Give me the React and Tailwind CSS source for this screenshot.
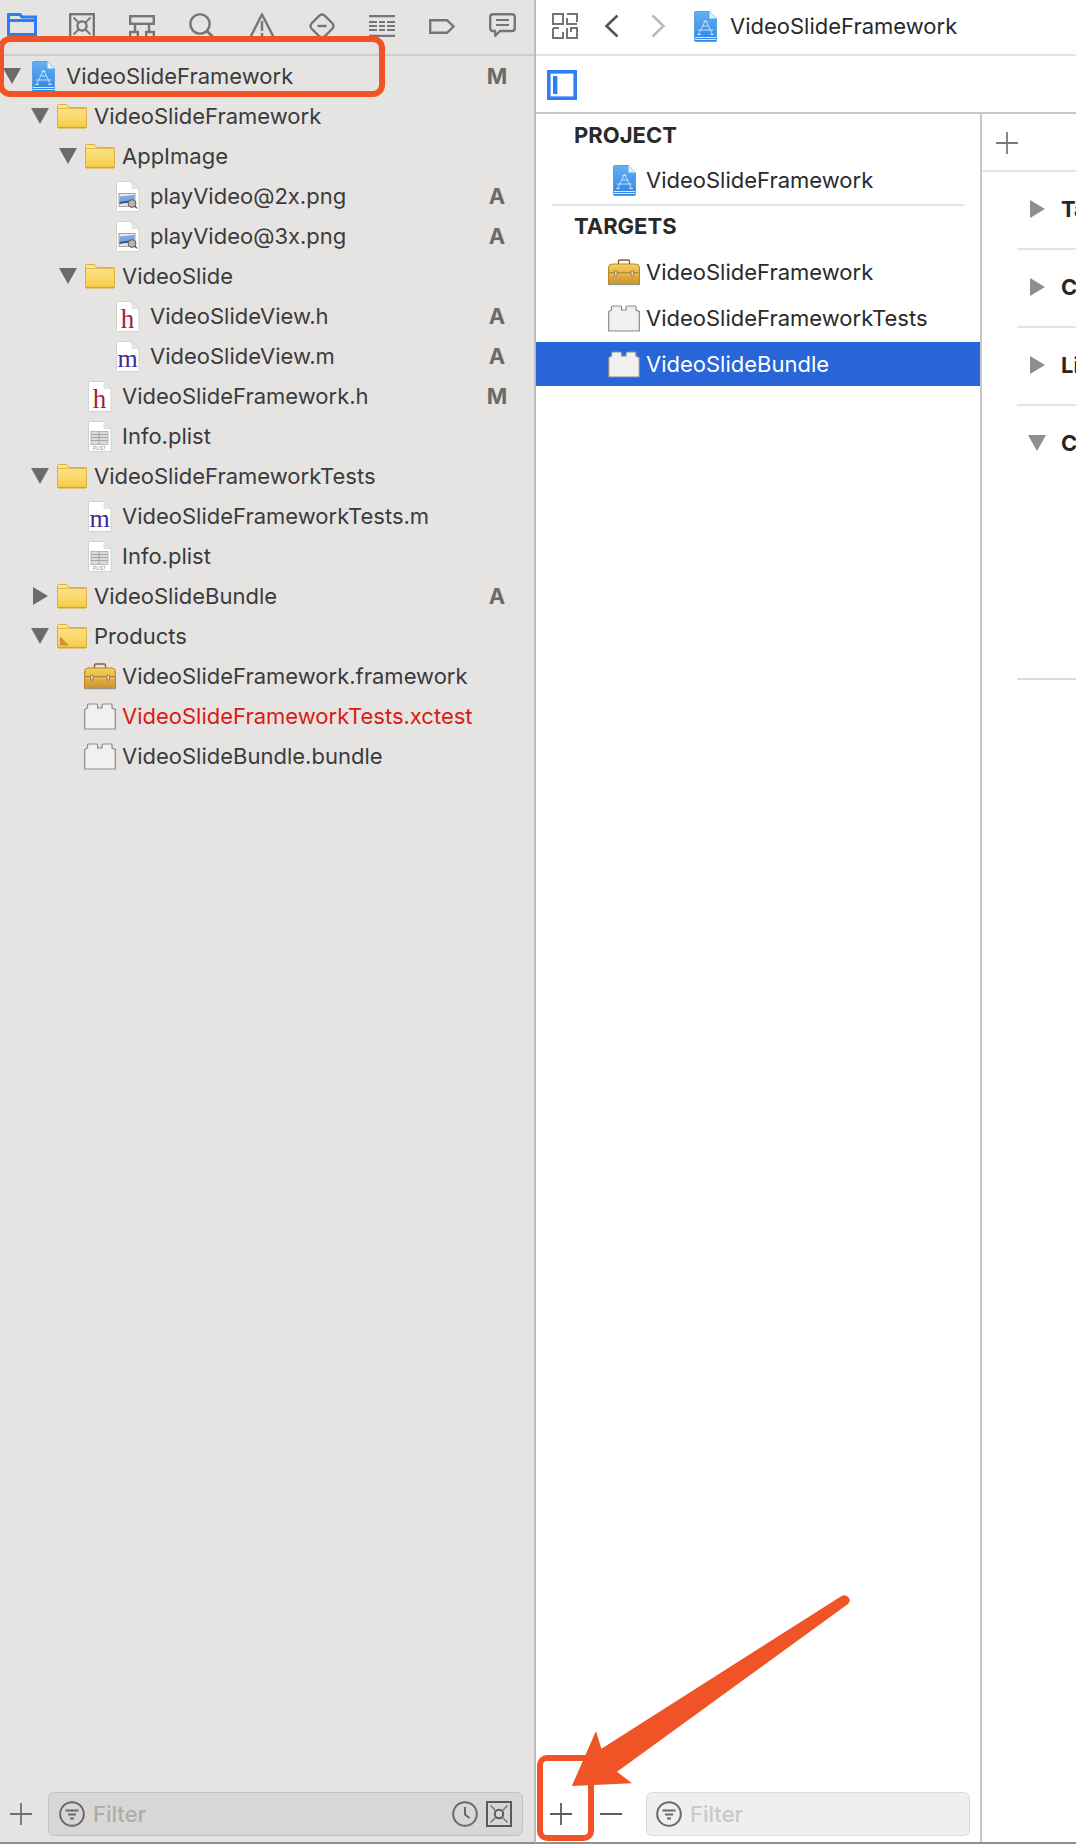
import React from "react";

const FONT = "font-['Inter','Liberation_Sans',sans-serif]";

function Defs() {
  return (
    <svg className="absolute w-0 h-0" aria-hidden="true">
      <defs>
        <linearGradient id="gFolder" x1="0" y1="0" x2="0" y2="1">
          <stop offset="0" stopColor="#fbe58f" />
          <stop offset="0.55" stopColor="#f9d968" />
          <stop offset="1" stopColor="#f5c945" />
        </linearGradient>
        <linearGradient id="gBlue" x1="0" y1="0" x2="0" y2="1">
          <stop offset="0" stopColor="#63b0f1" />
          <stop offset="1" stopColor="#2f84e4" />
        </linearGradient>
        <linearGradient id="gBox" x1="0" y1="0" x2="0" y2="1">
          <stop offset="0" stopColor="#f6d262" />
          <stop offset="0.5" stopColor="#e5b13f" />
          <stop offset="1" stopColor="#c9942f" />
        </linearGradient>
      </defs>
    </svg>
  );
}

function Tri({ open, dark = true }) {
  const c = dark ? "#6c6b69" : "#8e8e8e";
  return open ? (
    <svg width="18" height="16" viewBox="0 0 18 16" className="block">
      <path d="M0 0H18L9 16Z" fill={c} />
    </svg>
  ) : (
    <svg width="18" height="18" viewBox="0 0 18 18" className="block">
      <path d="M2 0L17 9L2 18Z" fill={c} />
    </svg>
  );
}

function Folder({ products }) {
  return (
    <svg width="30" height="25" viewBox="0 0 30 25" className="block">
      <path d="M.5 23V1.5Q.5.5 1.5.5H9.5L12 3.5H28.5Q29.5 3.5 29.5 4.5V23Q29.5 24 28.5 24H1.5Q.5 24 .5 23Z" fill="url(#gFolder)" stroke="#dcae42" />
      <path d="M1 4.5H29" stroke="#e5b94e" strokeWidth="1" />
      <path d="M1 23.5H29" stroke="#cfa23c" strokeWidth="1.2" />
      {products && <path d="M3 21.5V12.5L12 21.5Z" fill="#c6923a" />}
    </svg>
  );
}

function ProjectIcon() {
  return (
    <svg width="23" height="31" viewBox="0 0 23 31" className="block">
      <path d="M.5 1.5Q.5.5 1.5.5H15.5L22.5 7.5V29.5Q22.5 30.5 21.5 30.5H1.5Q.5 30.5 .5 29.5Z" fill="url(#gBlue)" stroke="#5aa0e2" />
      <path d="M15.5.5V7.5H22.5Z" fill="#e4f0fb" />
      <path d="M1 26.5H22M1 28.5H22" stroke="#d5e8fa" strokeWidth="1" />
      <path d="M11.5 9L4.5 23.5M11.5 9L18.5 23.5M3.5 19H19.5M8 15H15M3 23.5H7M16 23.5H20" stroke="#cfe4fa" strokeWidth="0.9" fill="none" />
      <path d="M9.5 10.5L13.5 10.5" stroke="#cfe4fa" strokeWidth="0.9" />
    </svg>
  );
}

function Doc({ children }) {
  return (
    <svg width="24" height="31" viewBox="0 0 24 31" className="block">
      <path d="M.5 1.2Q.5.5 1.2.5H16L23 7.5V29.8Q23 30.5 22.3 30.5H1.2Q.5 30.5 .5 29.8Z" fill="#ffffff" stroke="#d3d2d0" />
      <path d="M16 .5V7.5H23Z" fill="#e8e8e8" stroke="#d3d2d0" strokeWidth="0.6" />
      {children}
    </svg>
  );
}

function HFile() {
  return (
    <Doc>
      <text x="11.5" y="26.5" textAnchor="middle" fontFamily="'Liberation Serif',serif" fontSize="27" fill="#a51f36">h</text>
    </Doc>
  );
}

function MFile() {
  return (
    <Doc>
      <text x="11.5" y="26" textAnchor="middle" fontFamily="'Liberation Serif',serif" fontSize="26" fill="#3f2a90">m</text>
    </Doc>
  );
}

function PngFile() {
  return (
    <Doc>
      <rect x="3" y="12.5" width="16" height="13" fill="#e6e9ee" stroke="#8d7f6e" strokeWidth="0.7" />
      <path d="M3.5 15.5L18.5 14V20L3.5 21.5Z" fill="#7ba7e0" />
      <path d="M3.5 21L18.5 19V20.5L3.5 23Z" fill="#2f4f86" />
      <circle cx="16" cy="22.5" r="3.8" fill="#b9b6ae" stroke="#5c5a55" strokeWidth="1.1" />
      <path d="M18.8 25.2L21 27.2" stroke="#55534f" strokeWidth="1.5" />
    </Doc>
  );
}

function PlistFile() {
  return (
    <Doc>
      <rect x="3" y="10.5" width="17" height="13" fill="#dcdcdc" stroke="#a0a0a0" strokeWidth="0.7" />
      <path d="M3 13.5H20M3 16.5H20M3 19.5H20M11 10.5V23.5" stroke="#9a9a9a" strokeWidth="0.8" />
      <text x="11.5" y="29" textAnchor="middle" fontFamily="'Liberation Sans',sans-serif" fontSize="4.6" fill="#8d8d8d">PLIST</text>
    </Doc>
  );
}

function Toolbox() {
  return (
    <svg width="32" height="27" viewBox="0 0 32 27" className="block">
      <path d="M10.5 5V2.2Q10.5 1 11.7 1H20.3Q21.5 1 21.5 2.2V5" fill="none" stroke="#8a5d2a" strokeWidth="1.4" />
      <path d="M.5 9Q.5 5 4 5H28Q31.5 5 31.5 9V25.5H.5Z" fill="url(#gBox)" stroke="#b5842f" />
      <path d="M1 14H31" stroke="#a87728" strokeWidth="1.2" />
      <path d="M1 15.2H31" stroke="#f4d47a" strokeWidth="0.8" />
      <rect x="6.5" y="12" width="2.6" height="5" rx="1" fill="#e8e2d2" stroke="#6e5a35" strokeWidth="0.7" />
      <rect x="23" y="12" width="2.6" height="5" rx="1" fill="#e8e2d2" stroke="#6e5a35" strokeWidth="0.7" />
      <path d="M1 25.5H31" stroke="#9a9387" strokeWidth="1.4" />
    </svg>
  );
}

function Lego() {
  return (
    <svg width="32" height="27" viewBox="0 0 32 27" className="block">
      <path d="M.7 26V6.5L3.5 5V2.2Q3.5 1 4.7 1H12.5Q13.6 1 13.6 2.2V5H18V2.2Q18 1 19.2 1H27Q28 1 28 2.2V5L31.3 6.5V26Z" fill="#f0f0f0" stroke="#8a8a8a" strokeWidth="1.2" />
    </svg>
  );
}

const TB = "#767676";

function ToolbarIcons() {
  const s = { fill: "none", stroke: TB, strokeWidth: 2.4 };
  return (
    <div className="flex items-start -ml-2">
      <div className="w-[60px] flex justify-center">
        <svg width="30" height="23" viewBox="0 0 30 23" className="block">
          <path d="M1.5 21.5V1.5H13L15 4H28.5V21.5Z" fill="none" stroke="#2f7df6" strokeWidth="3" />
          <path d="M3 7.5H27" stroke="#2f7df6" strokeWidth="3" />
        </svg>
      </div>
      <div className="w-[60px] flex justify-center">
        <svg width="26" height="27" viewBox="0 0 26 27" className="block">
          <rect x="1.2" y="1.2" width="23.6" height="24.6" {...s} />
          <circle cx="13" cy="13" r="4.6" {...s} />
          <path d="M4.5 4.5L9.5 9.5M21.5 4.5L16.5 9.5M4.5 21.5L9.5 16.5M21.5 21.5L16.5 16.5" {...s} strokeWidth="1.8" />
        </svg>
      </div>
      <div className="w-[60px] flex justify-center pt-[2px]">
        <svg width="26" height="26" viewBox="0 0 26 26" className="block">
          <rect x="1.2" y="1.2" width="23.6" height="7.6" {...s} />
          <path d="M6 9V17M20 9V17" {...s} />
          <rect x="1.2" y="17" width="7.6" height="8" {...s} />
          <rect x="17.2" y="17" width="7.6" height="8" {...s} />
        </svg>
      </div>
      <div className="w-[60px] flex justify-center">
        <svg width="26" height="26" viewBox="0 0 26 26" className="block">
          <circle cx="11" cy="11" r="9.6" {...s} />
          <path d="M18 18L25 25" {...s} strokeWidth="3" />
        </svg>
      </div>
      <div className="w-[60px] flex justify-center">
        <svg width="26" height="26" viewBox="0 0 26 26" className="block">
          <path d="M13 1.5L25 25H1Z" {...s} />
          <path d="M13 8V18M13 20V23" {...s} />
        </svg>
      </div>
      <div className="w-[60px] flex justify-center">
        <svg width="26" height="27" viewBox="0 0 26 27" className="block">
          <path d="M10.5 2.5Q13 .5 15.5 2.5L23.5 10.5Q25.5 13 23.5 15.5L15.5 23.5Q13 25.5 10.5 23.5L2.5 15.5Q.5 13 2.5 10.5Z" {...s} />
          <path d="M8.5 13H17.5" {...s} />
        </svg>
      </div>
      <div className="w-[60px] flex justify-center pt-[2px]">
        <svg width="26" height="22" viewBox="0 0 26 22" className="block">
          <path d="M0 1H26M0 21H26" {...s} />
          <path d="M0 7H8M10 7H16M18 7H26M0 11H8M10 11H16M18 11H26M0 15H8M10 15H16M18 15H26" {...s} strokeWidth="2" />
        </svg>
      </div>
      <div className="w-[60px] flex justify-center pt-[6px]">
        <svg width="26" height="15" viewBox="0 0 26 15" className="block">
          <path d="M1.2 1.2H18L24.5 7.5L18 13.8H1.2Z" {...s} />
        </svg>
      </div>
      <div className="w-[60px] flex justify-center">
        <svg width="27" height="24" viewBox="0 0 27 24" className="block">
          <path d="M4 1.2H23Q25.8 1.2 25.8 4V15Q25.8 18 23 18H11L6.5 22.5L6 18H4Q1.2 18 1.2 15V4Q1.2 1.2 4 1.2Z" {...s} />
          <path d="M7 7H20M7 12H20" {...s} strokeWidth="2" />
        </svg>
      </div>
    </div>
  );
}

function Plus({ color = "#707070" }) {
  return (
    <svg width="22" height="22" viewBox="0 0 22 22" className="block">
      <path d="M0 11H22M11 0V22" stroke={color} strokeWidth="1.8" />
    </svg>
  );
}

function FilterIcon() {
  return (
    <svg width="26" height="26" viewBox="0 0 26 26" className="block shrink-0">
      <circle cx="13" cy="13" r="11.8" fill="none" stroke="#696969" strokeWidth="2" />
      <path d="M6.5 9.5H19.5M9 13.5H17M11 17.5H15" stroke="#696969" strokeWidth="2" />
    </svg>
  );
}

function Clock() {
  return (
    <svg width="26" height="26" viewBox="0 0 26 26" className="block">
      <circle cx="13" cy="13" r="11.8" fill="none" stroke="#696969" strokeWidth="2" />
      <path d="M13 6V13.5L17.5 17" fill="none" stroke="#696969" strokeWidth="2" />
    </svg>
  );
}

function BoxX() {
  return (
    <svg width="26" height="26" viewBox="0 0 26 26" className="block">
      <rect x="1" y="1" width="24" height="24" fill="none" stroke="#5a5a5a" strokeWidth="2" />
      <circle cx="13" cy="13" r="4.2" fill="none" stroke="#5a5a5a" strokeWidth="2" />
      <path d="M4.5 4.5L9.7 9.7M21.5 4.5L16.3 9.7M4.5 21.5L9.7 16.3M21.5 21.5L16.3 16.3" stroke="#7a7a7a" strokeWidth="1.6" />
    </svg>
  );
}

const INDENT = ["pl-[3px]", "pl-[31px]", "pl-[59px]", "pl-[87px]"];

const TREE = [
  { l: 0, t: "open", i: <ProjectIcon />, n: "VideoSlideFramework", s: "M" },
  { l: 1, t: "open", i: <Folder />, n: "VideoSlideFramework" },
  { l: 2, t: "open", i: <Folder />, n: "AppImage" },
  { l: 3, i: <PngFile />, n: "playVideo@2x.png", s: "A" },
  { l: 3, i: <PngFile />, n: "playVideo@3x.png", s: "A" },
  { l: 2, t: "open", i: <Folder />, n: "VideoSlide" },
  { l: 3, i: <HFile />, n: "VideoSlideView.h", s: "A" },
  { l: 3, i: <MFile />, n: "VideoSlideView.m", s: "A" },
  { l: 2, i: <HFile />, n: "VideoSlideFramework.h", s: "M" },
  { l: 2, i: <PlistFile />, n: "Info.plist" },
  { l: 1, t: "open", i: <Folder />, n: "VideoSlideFrameworkTests" },
  { l: 2, i: <MFile />, n: "VideoSlideFrameworkTests.m" },
  { l: 2, i: <PlistFile />, n: "Info.plist" },
  { l: 1, t: "closed", i: <Folder />, n: "VideoSlideBundle", s: "A" },
  { l: 1, t: "open", i: <Folder products />, n: "Products" },
  { l: 2, i: <Toolbox />, n: "VideoSlideFramework.framework" },
  { l: 2, i: <Lego />, n: "VideoSlideFrameworkTests.xctest", red: true },
  { l: 2, i: <Lego />, n: "VideoSlideBundle.bundle" },
];

function TreeRow({ row }) {
  return (
    <div className={`flex items-center h-10 ${INDENT[row.l]}`}>
      <div className="w-[18px] flex justify-center shrink-0">
        {row.t && <Tri open={row.t === "open"} />}
      </div>
      <div className="w-[45px] flex justify-center shrink-0">{row.i}</div>
      <span className={`text-[22px] leading-none whitespace-nowrap ${row.red ? "text-[#d91b12]" : "text-[#3b3b3b]"}`}>{row.n}</span>
      {row.s && (
        <span className="ml-auto mr-[17px] w-[40px] text-center text-[22px] leading-none font-bold text-[#6a6a6a]">{row.s}</span>
      )}
    </div>
  );
}

function TargetRow({ icon, name, selected }) {
  return (
    <div className={`flex items-center h-[44px] pl-[72px] gap-[6px] ${selected ? "bg-[#2765d9] text-white" : "text-[#2a2a2a]"}`}>
      <div className="w-[32px] flex justify-center shrink-0">{icon}</div>
      <span className="text-[22px] leading-none whitespace-nowrap">{name}</span>
    </div>
  );
}

function Phase({ open, label }) {
  return (
    <div className="flex items-center h-[74px] pl-[46px] gap-[15px]">
      <div className="w-[18px] flex justify-center shrink-0">
        <Tri open={open} dark={false} />
      </div>
      <span className="text-[22px] leading-none font-bold text-[#262626] whitespace-nowrap">{label}</span>
    </div>
  );
}

export default function App() {
  return (
    <div className={`relative w-[1076px] h-[1844px] overflow-hidden flex bg-white ${FONT}`}>
      <Defs />
      {/* navigator */}
      <aside className="w-[536px] h-full shrink-0 flex flex-col bg-[#e5e4e2] border-r-2 border-r-[#bdbcba] border-b-2 border-b-[#8f8f8f]">
        <div className="h-[56px] shrink-0 pt-[13px] border-b-2 border-[#cfcecc]">
          <ToolbarIcons />
        </div>
        <div className="flex-1 flex flex-col">
          {TREE.map((r, i) => (
            <TreeRow key={i} row={r} />
          ))}
        </div>
        <div className="h-[50px] shrink-0 flex items-start">
          <div className="w-[48px] h-[44px] flex items-center justify-center pr-[6px]">
            <Plus />
          </div>
          <div className="w-[475px] h-[44px] flex items-center pl-[10px] pr-[10px] rounded-[6px] bg-[#d8d7d5] border border-[#c3c2c0]">
            <FilterIcon />
            <span className="ml-[8px] text-[22px] leading-none font-medium text-[#adacaa]">Filter</span>
            <div className="ml-auto flex items-center gap-[8px]">
              <Clock />
              <BoxX />
            </div>
          </div>
        </div>
      </aside>

      {/* editor */}
      <main className="flex-1 h-full min-w-0 flex flex-col border-b-2 border-[#8f8f8f]">
        <div className="h-[56px] shrink-0 flex items-center border-b-2 border-[#e4e4e4] pb-[2px]">
          <svg width="26" height="26" viewBox="0 0 26 26" className="block ml-[16px]">
            <path d="M1 1H11V11H1ZM15 1H25V9M15 5V11H25M1 15H7M1 15V25H11V19M15 15V25H25V15H19V19" fill="none" stroke="#757575" strokeWidth="2" />
          </svg>
          <svg width="16" height="24" viewBox="0 0 16 24" className="block ml-[26px]">
            <path d="M13.5 1.5L2.5 12L13.5 22.5" fill="none" stroke="#555555" strokeWidth="2.6" />
          </svg>
          <svg width="16" height="24" viewBox="0 0 16 24" className="block ml-[30px]">
            <path d="M2.5 1.5L13.5 12L2.5 22.5" fill="none" stroke="#bbbbbb" strokeWidth="2.6" />
          </svg>
          <div className="ml-[28px]">
            <ProjectIcon />
          </div>
          <span className="ml-[13px] text-[22px] leading-none text-[#2a2a2a] whitespace-nowrap">VideoSlideFramework</span>
        </div>
        <div className="h-[58px] shrink-0 flex items-center pl-[11px] pt-[2px] border-b-2 border-[#c8c8c8]">
          <svg width="30" height="30" viewBox="0 0 30 30" className="block">
            <rect x="1.8" y="1.8" width="26.4" height="26.4" fill="none" stroke="#2f7df6" strokeWidth="3.6" />
            <rect x="6" y="6" width="4.4" height="18" fill="#2f7df6" />
          </svg>
        </div>
        <div className="flex-1 min-h-0 flex">
          <div className="w-[446px] shrink-0 flex flex-col border-r-2 border-[#c8c8c8]">
            <div className="h-[42px] flex items-center pl-[38px] text-[22px] leading-none font-bold text-[#2a2a2a]">PROJECT</div>
            <div className="mt-[2px]">
              <TargetRow icon={<ProjectIcon />} name="VideoSlideFramework" />
            </div>
            <div className="mt-[2px] ml-[16px] mr-[16px] h-[2px] bg-[#e4e4e4]" />
            <div className="h-[40px] flex items-center pl-[38px] text-[22px] leading-none font-bold text-[#2a2a2a]">TARGETS</div>
            <div className="mt-[4px] flex flex-col gap-[2px]">
              <TargetRow icon={<Toolbox />} name="VideoSlideFramework" />
              <TargetRow icon={<Lego />} name="VideoSlideFrameworkTests" />
              <TargetRow icon={<Lego />} name="VideoSlideBundle" selected />
            </div>
            <div className="mt-auto h-[50px] flex items-start">
              <div className="w-[36px] h-[44px] flex items-center justify-end">
                <Plus color="#5c5c5c" />
              </div>
              <div className="w-[50px] h-[44px] flex items-center justify-end">
                <div className="w-[22px] h-[2px] bg-[#5c5c5c]" />
              </div>
              <div className="ml-[24px] w-[324px] h-[44px] flex items-center pl-[9px] rounded-[6px] bg-[#efefef] border border-[#dcdcdc]">
                <FilterIcon />
                <span className="ml-[8px] text-[22px] leading-none font-medium text-[#c9c9c9]">Filter</span>
              </div>
            </div>
          </div>
          <div className="flex-1 min-w-0 overflow-hidden">
            <div className="h-[58px] flex items-center pl-[14px] pt-[2px] border-b-2 border-[#e4e4e4]">
              <Plus color="#7a7a7a" />
            </div>
            <Phase label="Ta" />
            <div className="ml-[35px] mt-[2px] h-[2px] bg-[#e4e4e4]" />
            <Phase label="C" />
            <div className="ml-[35px] mt-[2px] h-[2px] bg-[#e4e4e4]" />
            <Phase label="Li" />
            <div className="ml-[35px] mt-[2px] h-[2px] bg-[#e4e4e4]" />
            <Phase open label="C" />
            <div className="h-[198px]" />
            <div className="ml-[35px] h-[2px] bg-[#dcdcdc]" />
          </div>
        </div>
      </main>

      {/* annotations */}
      <div className="absolute left-[-2px] top-[36px] w-[387px] h-[61px] border-[6px] border-[#f05426] rounded-[12px]" />
      <div className="absolute left-[537px] top-[1755px] w-[57px] h-[86px] border-[6px] border-[#f05426] rounded-[10px]" />
      <svg className="absolute left-0 top-0 pointer-events-none" width="1076" height="1844" viewBox="0 0 1076 1844">
        <path d="M841.6 1596Q846 1594 849 1598Q851 1601 848 1604L617 1771.7L632 1783.3L571.8 1786L596 1731L601.4 1748.7Z" fill="#f05426" />
      </svg>
    </div>
  );
}
